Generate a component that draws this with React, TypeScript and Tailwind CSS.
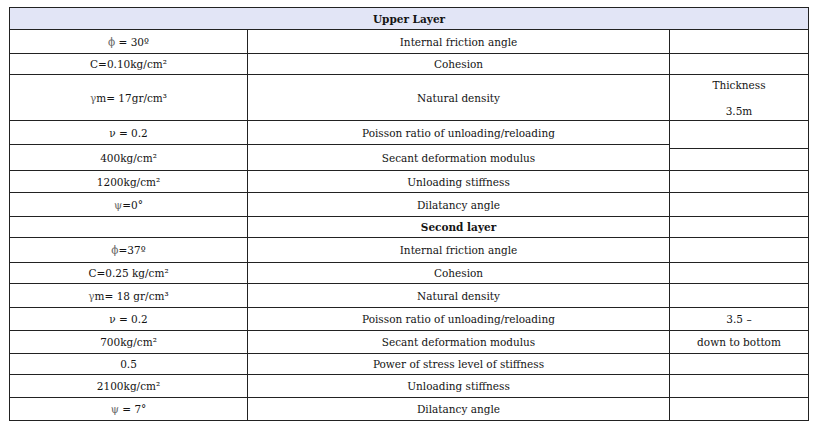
import React from 'react';

type Row = { h: number; a?: React.ReactNode; b: string; bold?: boolean };

const Sym = ({ children }: { children: React.ReactNode }) => (
  <span className="text-[#666]">{children}</span>
);

const rows: Row[] = [
  { h: 24, a: <><Sym>ϕ</Sym>{' = 30º'}</>, b: 'Internal friction angle' },
  { h: 21, a: <>C=0.10kg/cm²</>, b: 'Cohesion' },
  { h: 46, a: <><Sym>γ</Sym>{'m= 17gr/cm³'}</>, b: 'Natural density' },
  { h: 24, a: <>{'ν = 0.2'}</>, b: 'Poisson ratio of unloading/reloading' },
  { h: 26, a: <>400kg/cm²</>, b: 'Secant deformation modulus' },
  { h: 22, a: <>1200kg/cm²</>, b: 'Unloading stiffness' },
  { h: 24, a: <><Sym>ψ</Sym>{'=0°'}</>, b: 'Dilatancy angle' },
  { h: 21, b: 'Second layer', bold: true },
  { h: 25, a: <><Sym>ϕ</Sym>{'=37º'}</>, b: 'Internal friction angle' },
  { h: 21, a: <>C=0.25 kg/cm²</>, b: 'Cohesion' },
  { h: 24, a: <><Sym>γ</Sym>{'m= 18 gr/cm³'}</>, b: 'Natural density' },
  { h: 23, a: <>{'ν = 0.2'}</>, b: 'Poisson ratio of unloading/reloading' },
  { h: 23, a: <>700kg/cm²</>, b: 'Secant deformation modulus' },
  { h: 21, a: <>0.5</>, b: 'Power of stress level of stiffness' },
  { h: 23, a: <>2100kg/cm²</>, b: 'Unloading stiffness' },
  { h: 23, a: <><Sym>ψ</Sym>{' = 7°'}</>, b: 'Dilatancy angle' },
];

// third column is split on its own lines, not the same as the left rows
const side: { h: number; lines?: string[] }[] = [
  { h: 24 },
  { h: 21 },
  { h: 46, lines: ['Thickness', '3.5m'] },
  { h: 28 },
  { h: 22 },
  { h: 22 },
  { h: 24 },
  { h: 21 },
  { h: 25 },
  { h: 21 },
  { h: 24 },
  { h: 23, lines: ['3.5 –'] },
  { h: 23, lines: ['down to bottom'] },
  { h: 21 },
  { h: 23 },
  { h: 23 },
];

export default function App() {
  return (
    <div className="w-[821px] h-[426px] bg-white pt-[7px] pl-[9px] font-['DejaVu_Serif',serif] text-[10.5px] text-[#141414]">
      <div className="w-[800px] border-x border-t border-[#222]">
        <div className="h-[22px] pt-[2px] bg-[#e2e5f6] border-b border-[#222] flex items-center justify-center font-bold">
          Upper Layer
        </div>
        <div className="flex">
          <div className="flex flex-col">
            {rows.map((r, i) => (
              <div key={i} className="flex border-b border-[#222]" style={{ height: r.h }}>
                <div className="w-[238px] pt-[2px] border-r border-[#222] flex items-center justify-center whitespace-pre">{r.a}</div>
                <div className="w-[422px] pt-[2px] border-r border-[#222] flex items-center justify-center">
                  <span className={r.bold ? 'font-bold' : ''}>{r.b}</span>
                </div>
              </div>
            ))}
          </div>
          <div className="flex-1 flex flex-col">
            {side.map((s, i) => (
              <div
                key={i}
                className="border-b border-[#222] pt-[2px] flex flex-col items-center justify-center gap-[10px]"
                style={{ height: s.h }}
              >
                {s.lines?.map((l) => <span key={l}>{l}</span>)}
              </div>
            ))}
          </div>
        </div>
      </div>
    </div>
  );
}
